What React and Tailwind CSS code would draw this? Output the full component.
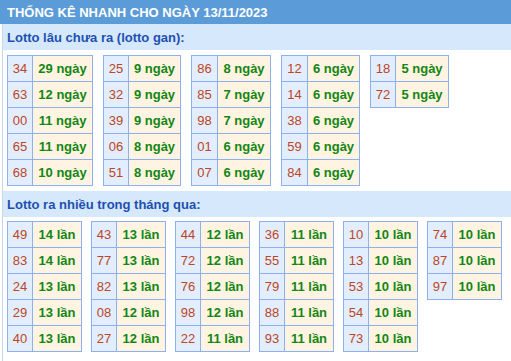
import React from "react";

const gan = [
  { w: ["w-[25px]", "w-[60px]"], rows: [["34", "29"], ["63", "12"], ["00", "11"], ["65", "11"], ["68", "10"]] },
  { w: ["w-[25px]", "w-[52px]"], rows: [["25", "9"], ["32", "9"], ["39", "9"], ["06", "8"], ["51", "8"]] },
  { w: ["w-[26px]", "w-[53px]"], rows: [["86", "8"], ["85", "7"], ["98", "7"], ["01", "6"], ["07", "6"]] },
  { w: ["w-[26px]", "w-[52px]"], rows: [["12", "6"], ["14", "6"], ["38", "6"], ["59", "6"], ["84", "6"]] },
  { w: ["w-[25px]", "w-[53px]"], rows: [["18", "5"], ["72", "5"]] },
];

const nhieu = [
  [["49", "14"], ["83", "14"], ["24", "13"], ["29", "13"], ["40", "13"]],
  [["43", "13"], ["77", "13"], ["82", "13"], ["08", "12"], ["27", "12"]],
  [["44", "12"], ["72", "12"], ["76", "12"], ["98", "12"], ["22", "11"]],
  [["36", "11"], ["55", "11"], ["79", "11"], ["88", "11"], ["93", "11"]],
  [["10", "10"], ["13", "10"], ["53", "10"], ["54", "10"], ["73", "10"]],
  [["74", "10"], ["87", "10"], ["97", "10"]],
];

function Block({ rows, unit, w }) {
  return (
    <div className="flex flex-col self-start border-l border-t border-[#8db0ee]">
      {rows.map(([n, c], i) => (
        <div key={i} className="flex h-[26px]">
          <div
            className={`${w[0]} flex items-center justify-center border-r border-b border-[#8db0ee] bg-[#e2eefd] text-[#bd4426]`}
          >
            {n}
          </div>
          <div
            className={`${w[1]} flex items-center justify-center border-r border-b border-[#8db0ee] bg-[#fff4e2] font-bold text-[#138613] whitespace-nowrap`}
          >
            {c} {unit}
          </div>
        </div>
      ))}
    </div>
  );
}

export default function App() {
  return (
    <div
      className="w-[511px] h-[361px] overflow-hidden bg-white text-[13px] leading-none"
      style={{ fontFamily: '"Liberation Sans", Arial, sans-serif' }}
    >
      <div className="h-[24px] bg-[#5b9bd8] pl-[7px] flex items-center font-bold text-white text-[13px]">
        THỐNG KÊ NHANH CHO NGÀY 13/11/2023
      </div>
      <div className="ml-[2px] border-l border-[#c9d6e8] h-[337px]">
        <div className="h-[26px] bg-[#d5e8fc] flex items-center pl-[4px] font-bold text-[#1e50b0]">
          Lotto lâu chưa ra (lotto gan):
        </div>
        <div className="flex gap-[10px] pl-[4px] pt-[5px] h-[141px]">
          {gan.map((t, i) => (
            <Block key={i} rows={t.rows} w={t.w} unit="ngày" />
          ))}
        </div>
        <div className="h-[26px] bg-[#d5e8fc] flex items-center pl-[4px] font-bold text-[#1e50b0]">
          Lotto ra nhiều trong tháng qua:
        </div>
        <div className="flex gap-[9px] pl-[4px] pt-[4px]">
          {nhieu.map((r, i) => (
            <Block key={i} rows={r} w={["w-[25px]", "w-[49px]"]} unit="lần" />
          ))}
        </div>
      </div>
    </div>
  );
}
